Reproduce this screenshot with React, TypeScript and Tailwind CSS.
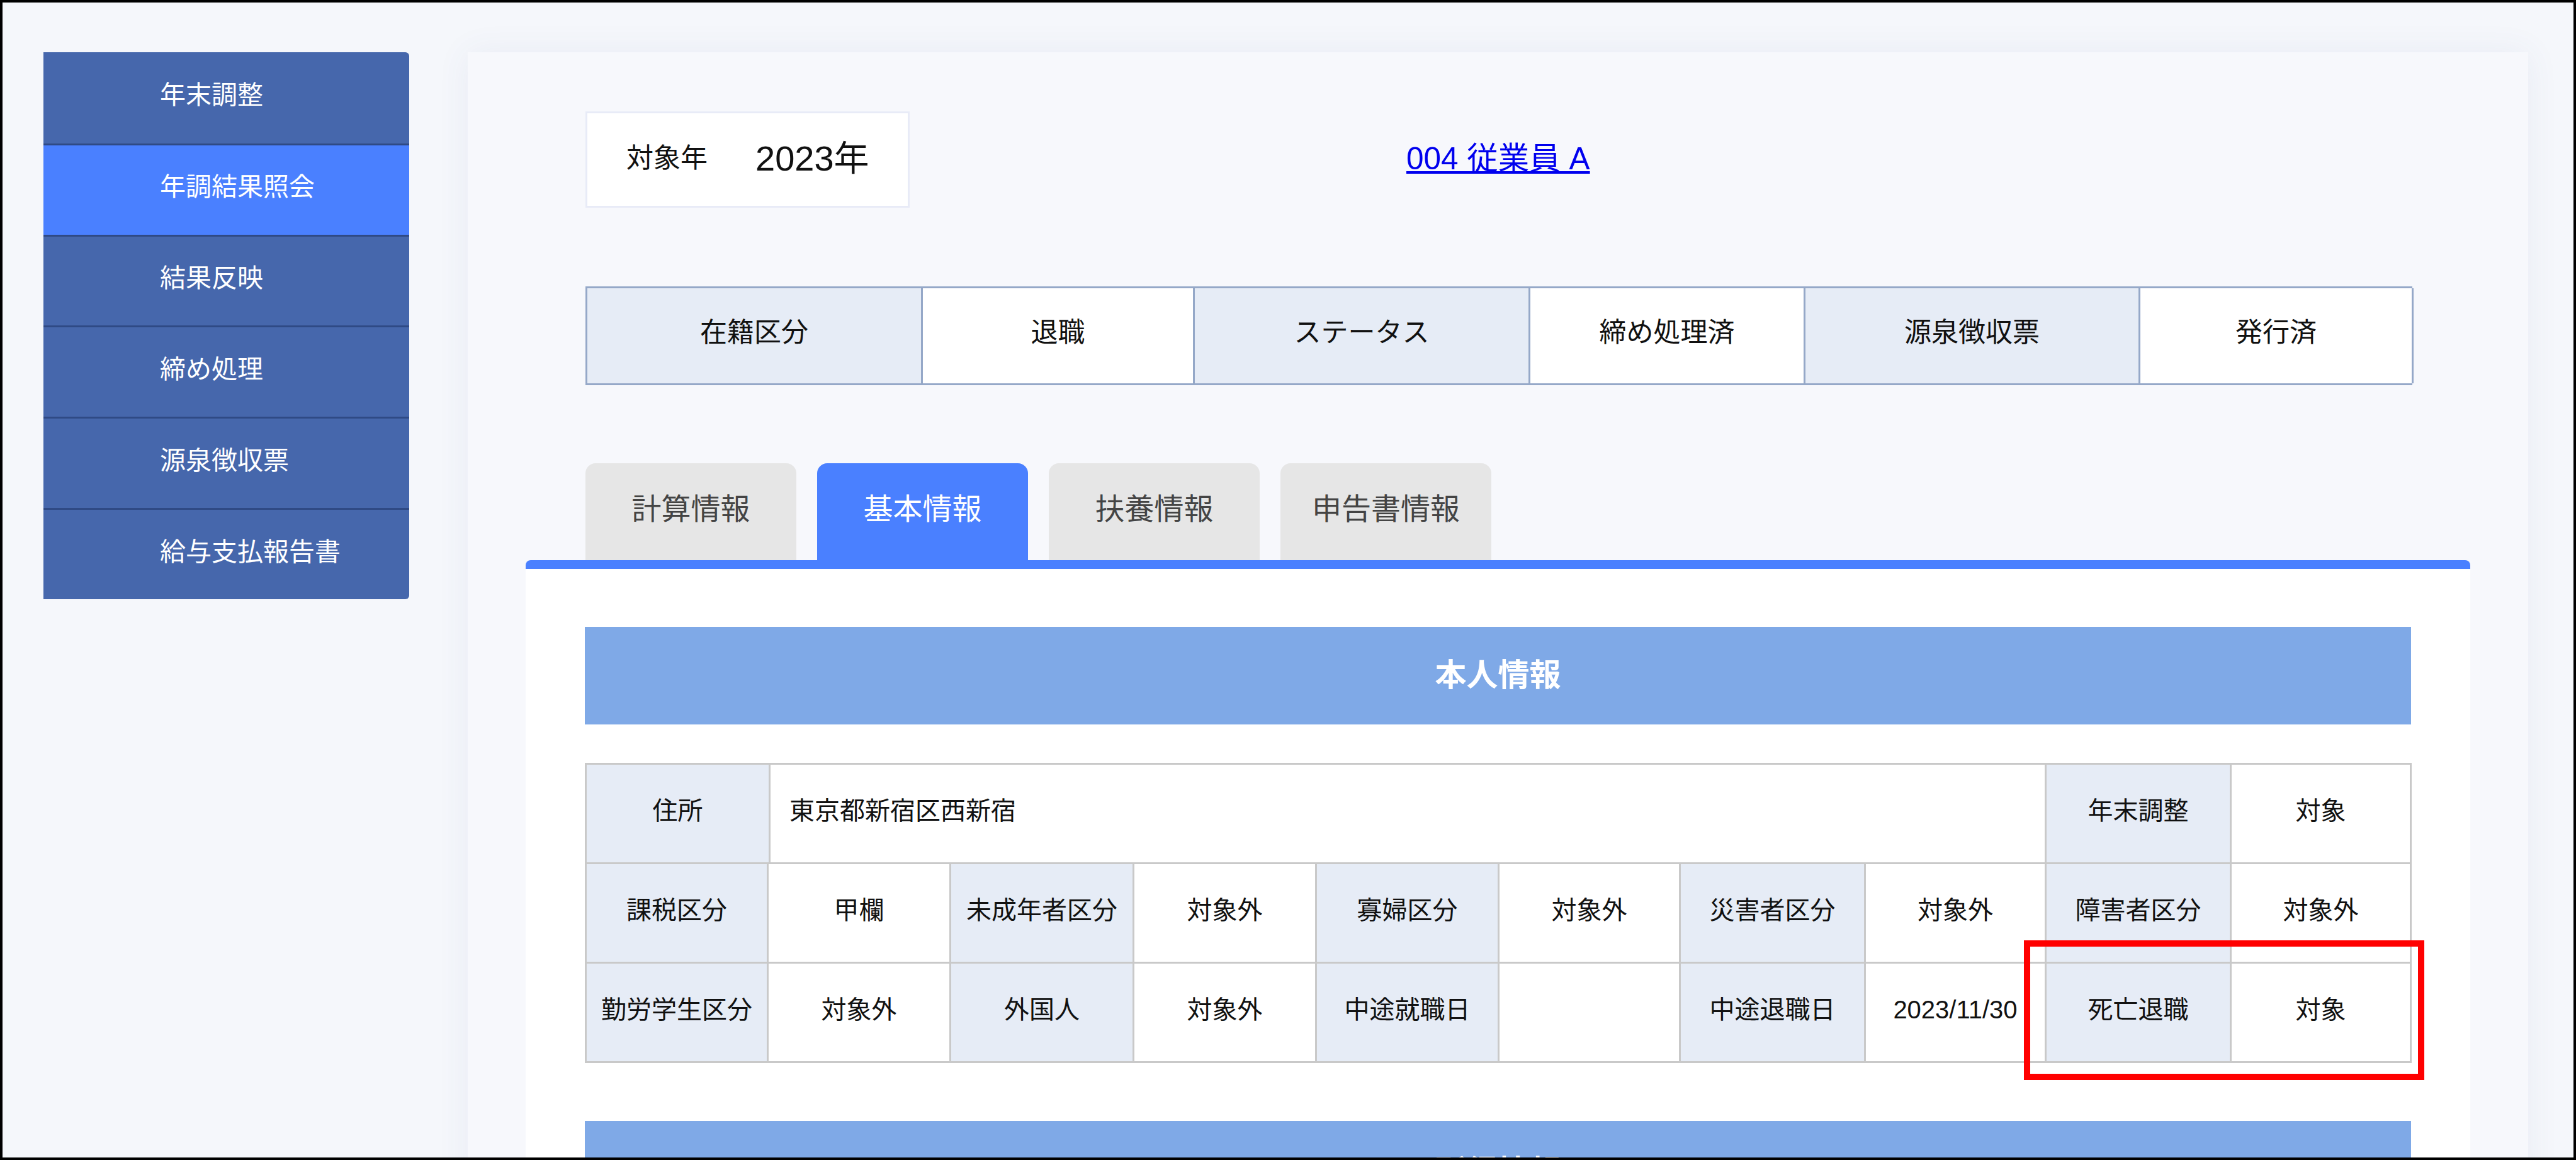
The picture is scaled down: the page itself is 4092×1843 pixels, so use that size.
const menuItems = ["年末調整", "年調結果照会", "結果反映", "締め処理", "源泉徴収票", "給与支払報告書"];

const statusCells = [
  { text: "在籍区分", label: true },
  { text: "退職", label: false },
  { text: "ステータス", label: true },
  { text: "締め処理済", label: false },
  { text: "源泉徴収票", label: true },
  { text: "発行済", label: false },
];

const tabs = ["計算情報", "基本情報", "扶養情報", "申告書情報"];

const row2 = ["課税区分", "甲欄", "未成年者区分", "対象外", "寡婦区分", "対象外", "災害者区分", "対象外", "障害者区分", "対象外"];
const row3 = ["勤労学生区分", "対象外", "外国人", "対象外", "中途就職日", "", "中途退職日", "2023/11/30", "死亡退職", "対象"];

function Cell({ text, label, className }: { text: string; label: boolean; className?: string }) {
  return (
    <div
      className={
        "flex items-center justify-center border-r-[3px] border-[#c9c9c9] pb-[9px] whitespace-nowrap " +
        (label ? "bg-[#e6ecf6] " : "bg-white ") +
        (className ?? "")
      }
    >
      {text}
    </div>
  );
}

export default function App() {
  return (
    <div className="relative box-border flex h-[1843px] w-[4092px] items-start overflow-hidden border-4 border-black bg-[#f5f7fb] pt-[79px] pl-[65px] [font-family:'Liberation_Sans','Noto_Sans_CJK_JP',sans-serif] text-[#111]">
      {/* side menu */}
      <div className="flex h-[869px] w-[581px] shrink-0 flex-col overflow-hidden rounded-r-md">
        {menuItems.map((item, i) => (
          <div
            key={item}
            className={
              "flex h-[145px] items-center pb-[7px] pl-[185px] text-[41px] text-white " +
              (i > 0 ? "border-t-[3px] border-[#2f4a85] " : "") +
              (i === 1 ? "bg-[#4a80ff]" : "bg-[#4667ac]")
            }
          >
            {item}
          </div>
        ))}
      </div>

      {/* main panel */}
      <div className="ml-[93px] flex h-[1800px] w-[3273px] shrink-0 flex-col bg-[#f7f8fc] px-[92px] pt-[94px] shadow-[0_0_50px_rgba(70,90,150,0.07)]">
        <div className="ml-[95px] w-[2902px]">
          <div className="flex items-center">
            <div className="flex h-[153px] w-[515px] items-center border-[3px] border-[#e8ebf7] bg-white pb-1 pl-[62px]">
              <span className="text-[43px]">対象年</span>
              <span className="ml-[76px] text-[56px]">2023年</span>
            </div>
            <a href="#" className="mb-[3px] ml-[789px] text-[49.5px] text-[#0000ee] underline">
              004 従業員 A
            </a>
          </div>

          <div className="mt-[125px] grid h-[157px] grid-cols-[533px_432px_533px_437px_532px_434px] border-y-[3px] border-l-[3px] border-[#95a8c8] text-[43px]">
            {statusCells.map((c) => (
              <div
                key={c.text}
                className={
                  "flex items-center justify-center border-r-[3px] border-[#95a8c8] pb-[10px] " +
                  (c.label ? "bg-[#e6ecf6]" : "bg-white")
                }
              >
                {c.text}
              </div>
            ))}
          </div>

          <div className="mt-[124px] flex gap-[33px]">
            {tabs.map((tab, i) => (
              <div
                key={tab}
                className={
                  "flex h-[154px] w-[335px] items-center justify-center rounded-t-[16px] pb-[8px] text-[47px] " +
                  (i === 1 ? "bg-[#4a80ff] text-white" : "bg-[#e6e6e6] text-[#444]")
                }
              >
                {tab}
              </div>
            ))}
          </div>
        </div>

        {/* white card */}
        <div className="flex-1 rounded-t-[8px] border-t-[14px] border-[#4a80ff] bg-white pt-[92px] pr-[94px] pl-[94px]">
          <div className="flex h-[155px] items-center justify-center bg-[#7fa9e7] text-[50px] font-bold text-white">
            本人情報
          </div>

          <div className="mt-[61px] w-[2902px] border-t-[3px] border-[#c9c9c9] text-[40px]">
            <div className="grid h-[158px] grid-cols-[292px_2027px_294px_286px] border-b-[3px] border-l-[3px] border-[#c9c9c9]">
              <Cell text="住所" label />
              <Cell text="東京都新宿区西新宿" label={false} className="justify-start! pl-[30px]" />
              <Cell text="年末調整" label />
              <Cell text="対象" label={false} />
            </div>
            {[row2, row3].map((row) => (
              <div
                key={row[0]}
                className="grid h-[158px] grid-cols-[289px_290px_291px_290px_290px_288px_294px_287px_294px_286px] border-b-[3px] border-l-[3px] border-[#c9c9c9]"
              >
                {row.map((text, i) => (
                  <Cell key={i} text={text} label={i % 2 === 0} />
                ))}
              </div>
            ))}
          </div>

          <div className="mt-[92px] flex h-[155px] items-center justify-center bg-[#7fa9e7] pt-[8px] text-[50px] font-bold text-white">
            所得情報
          </div>
        </div>
      </div>

      {/* red highlight */}
      <div className="absolute top-[1490px] left-[3211px] h-[222px] w-[636px] border-[10px] border-[#ff0000]" />
    </div>
  );
}
